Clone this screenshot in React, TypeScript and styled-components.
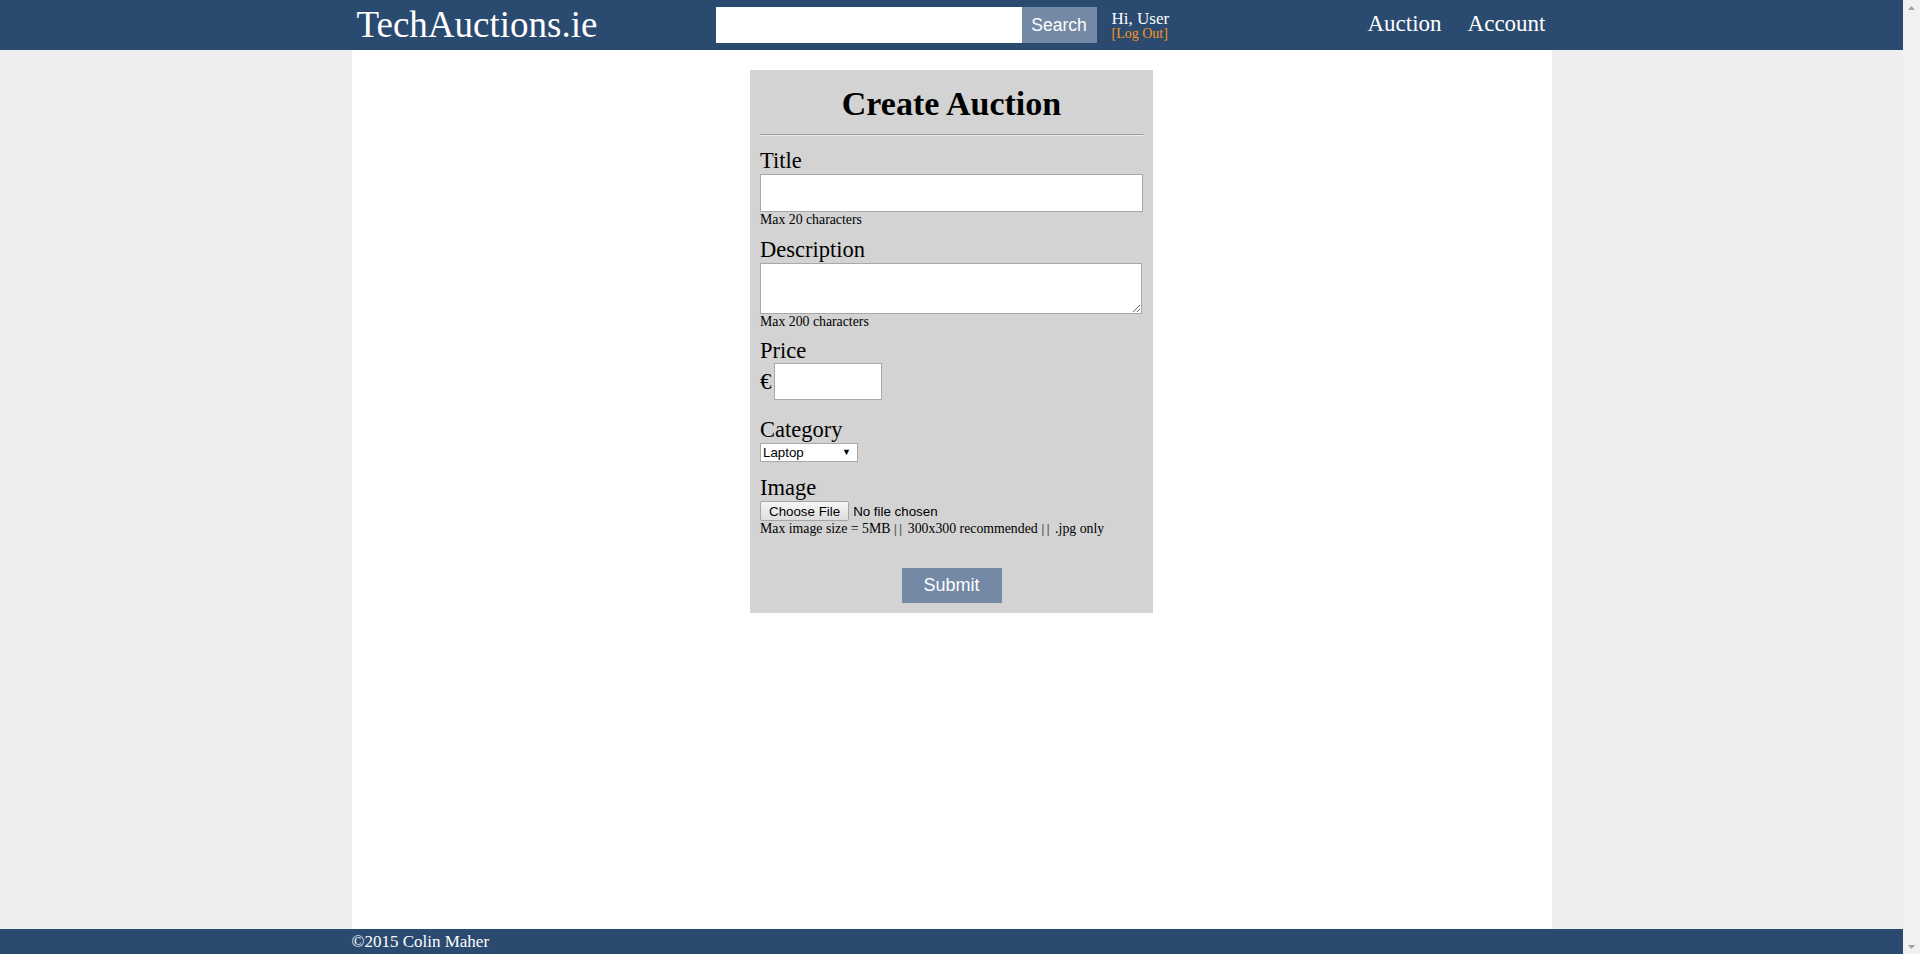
import React from "react";
import styled, { createGlobalStyle } from "styled-components";

const BLUE = "#2b4a6f";
const BTN = "#7389a6";
const SERIF = `"Liberation Serif", "Times New Roman", serif`;
const SANS = `"Liberation Sans", Arial, sans-serif`;

const Global = createGlobalStyle`
  html { background: #eeeeee; }
  body { margin: 0; background: #eeeeee; font-family: ${SERIF}; color: #000; overflow: hidden; }
  * { box-sizing: border-box; }
`;

const Viewport = styled.div`
  display: flex;
  height: 100vh;
`;

const Page = styled.div`
  flex: 1;
  min-width: 0;
  display: flex;
  flex-direction: column;
`;

const ScrollTrack = styled.div`
  width: 17px;
  flex-shrink: 0;
  background: #f1f1f1;
  display: flex;
  flex-direction: column;
  justify-content: space-between;
  align-items: center;
  padding: 6px 0 5px;
`;

const Header = styled.header`
  background: ${BLUE};
  height: 50px;
  flex-shrink: 0;
`;

const HeaderInner = styled.div`
  width: 1200px;
  height: 50px;
  margin: 0 auto;
  padding: 0 6px 0 5px;
  display: flex;
  align-items: center;
`;

const Brand = styled.a`
  width: 359px;
  flex-shrink: 0;
  font-size: 37px;
  line-height: 40px;
  color: #fff;
  text-decoration: none;
  white-space: nowrap;
`;

const SearchForm = styled.form`
  display: flex;
  height: 36px;
`;

const SearchInput = styled.input`
  width: 306px;
  height: 36px;
  border: none;
  margin: 0;
  padding: 0 6px;
  background: #fff;
  outline: none;
`;

const SearchButton = styled.button`
  width: 75px;
  height: 36px;
  border: none;
  margin: 0;
  padding: 0;
  background: ${BTN};
  color: #fff;
  font-family: ${SANS};
  font-size: 17.5px;
  cursor: pointer;
`;

const UserBox = styled.div`
  align-self: flex-start;
  padding-top: 10px;
  margin-left: 15px;
  display: flex;
  flex-direction: column;
`;

const Greeting = styled.span`
  font-size: 17px;
  line-height: 18px;
  color: #fff;
`;

const LogOut = styled.a`
  margin-top: -1px;
  font-size: 14px;
  line-height: 14px;
  color: #f7941e;
  text-decoration: none;
`;

const Nav = styled.nav`
  margin-left: auto;
  align-self: flex-start;
  padding-top: 10px;
  display: flex;
  gap: 26px;
`;

const NavLink = styled.a`
  font-size: 23px;
  line-height: 27px;
  color: #fff;
  text-decoration: none;
`;

const Main = styled.main`
  flex: 1;
  width: 1200px;
  margin: 0 auto;
  background: #fff;
  display: flex;
  justify-content: center;
  align-items: flex-start;
  padding-top: 20px;
`;

const Panel = styled.form`
  width: 403px;
  background: #d3d3d3;
  padding: 14px 10px 10px;
  display: flex;
  flex-direction: column;
`;

const Heading = styled.h1`
  margin: 0;
  font-size: 34px;
  line-height: 40px;
  font-weight: bold;
  text-align: center;
`;

const Divider = styled.hr`
  margin: 10px 0 0;
  height: 0;
  border: none;
  border-top: 1px solid #9c9c9c;
  border-bottom: 1px solid #ececec;
`;

const Field = styled.div<{ $space: number }>`
  margin-top: ${(p) => p.$space}px;
  display: flex;
  flex-direction: column;
  align-items: flex-start;
`;

const Label = styled.label`
  font-size: 22.5px;
  line-height: 27px;
`;

const TextInput = styled.input`
  width: 383px;
  height: 38px;
  margin: 0;
  border: 1px solid #a9a9a9;
  background: #fff;
  padding: 2px 4px;
  font-size: 16px;
`;

const TextArea = styled.textarea`
  width: 382px;
  height: 51px;
  margin: 0;
  border: 1px solid #a9a9a9;
  background: #fff;
  padding: 2px 4px;
  font-family: ${SERIF};
  font-size: 14px;
  display: block;
`;

const Hint = styled.span`
  font-size: 13.8px;
  line-height: 16px;
  white-space: nowrap;
`;

const Bars = styled.span`
  font-family: ${SANS};
  font-size: 12.5px;
  color: #555;
  letter-spacing: 2px;
`;

const PriceRow = styled.div`
  display: flex;
  align-items: center;
  margin-top: -1px;
`;

const Euro = styled.span`
  font-size: 23px;
  line-height: 27px;
  margin-right: 2px;
`;

const PriceInput = styled.input`
  width: 108px;
  height: 37px;
  margin: 0;
  border: 1px solid #a9a9a9;
  background: #fff;
  padding: 2px 4px;
`;

const SelectWrap = styled.div`
  position: relative;
  width: 98px;
  height: 19px;
`;

const Select = styled.select`
  appearance: none;
  width: 98px;
  height: 19px;
  margin: 0;
  border: 1px solid #a9a9a9;
  border-radius: 0;
  background: #fff;
  padding: 0 0 0 2px;
  font-family: ${SANS};
  font-size: 13.33px;
  color: #000;
  outline: none;
`;

const SelectArrow = styled.span`
  position: absolute;
  right: 7px;
  top: 4px;
  font-family: ${SANS};
  font-size: 9px;
  line-height: 10px;
  pointer-events: none;
`;

const FileRow = styled.div`
  display: flex;
  align-items: center;
  height: 20px;
`;

const FileButton = styled.button`
  height: 20px;
  margin: 0;
  padding: 0 8px;
  border: 1px solid #a6a6a6;
  border-radius: 2px;
  background: linear-gradient(#f6f6f6, #dedede);
  font-family: ${SANS};
  font-size: 13.33px;
  color: #000;
`;

const FileName = styled.span`
  margin-left: 4px;
  font-family: ${SANS};
  font-size: 13.33px;
`;

const Submit = styled.button`
  align-self: center;
  margin-top: 31px;
  width: 100px;
  height: 35px;
  border: none;
  padding: 0;
  background: ${BTN};
  color: #fff;
  font-family: ${SANS};
  font-size: 18px;
  cursor: pointer;
`;

const Footer = styled.footer`
  background: ${BLUE};
  height: 25px;
  flex-shrink: 0;
`;

const FooterInner = styled.div`
  width: 1200px;
  margin: 0 auto;
  font-size: 17px;
  line-height: 25px;
  color: #fff;
`;

const Arrow = ({ up }: { up?: boolean }) => (
  <svg width="7" height="4" viewBox="0 0 7 4" aria-hidden="true">
    <path d={up ? "M3.5 0L7 4H0z" : "M0 0h7L3.5 4z"} fill="#a3a3a3" />
  </svg>
);

export default function App() {
  return (
    <>
      <Global />
      <Viewport>
        <Page>
          <Header>
            <HeaderInner>
              <Brand href="#">TechAuctions.ie</Brand>
              <SearchForm onSubmit={(e) => e.preventDefault()}>
                <SearchInput type="text" />
                <SearchButton type="submit">Search</SearchButton>
              </SearchForm>
              <UserBox>
                <Greeting>Hi, User</Greeting>
                <LogOut href="#">[Log Out]</LogOut>
              </UserBox>
              <Nav>
                <NavLink href="#">Auction</NavLink>
                <NavLink href="#">Account</NavLink>
              </Nav>
            </HeaderInner>
          </Header>
          <Main>
            <Panel onSubmit={(e) => e.preventDefault()}>
              <Heading>Create Auction</Heading>
              <Divider />
              <Field $space={11}>
                <Label>Title</Label>
                <TextInput type="text" />
                <Hint>Max 20 characters</Hint>
              </Field>
              <Field $space={7.5}>
                <Label>Description</Label>
                <TextArea />
                <Hint>Max 200 characters</Hint>
              </Field>
              <Field $space={7.5}>
                <Label>Price</Label>
                <PriceRow>
                  <Euro>€</Euro>
                  <PriceInput type="text" />
                </PriceRow>
              </Field>
              <Field $space={16}>
                <Label>Category</Label>
                <SelectWrap>
                  <Select defaultValue="Laptop">
                    <option>Laptop</option>
                    <option>Desktop</option>
                    <option>Phone</option>
                    <option>Tablet</option>
                  </Select>
                  <SelectArrow>▼</SelectArrow>
                </SelectWrap>
              </Field>
              <Field $space={12}>
                <Label>Image</Label>
                <FileRow>
                  <FileButton type="button">Choose File</FileButton>
                  <FileName>No file chosen</FileName>
                </FileRow>
                <Hint>
                  Max image size = 5MB <Bars>||</Bars> 300x300 recommended <Bars>||</Bars> .jpg only
                </Hint>
              </Field>
              <Submit type="submit">Submit</Submit>
            </Panel>
          </Main>
          <Footer>
            <FooterInner>©2015 Colin Maher</FooterInner>
          </Footer>
        </Page>
        <ScrollTrack aria-hidden="true">
          <Arrow up />
          <Arrow />
        </ScrollTrack>
      </Viewport>
    </>
  );
}
